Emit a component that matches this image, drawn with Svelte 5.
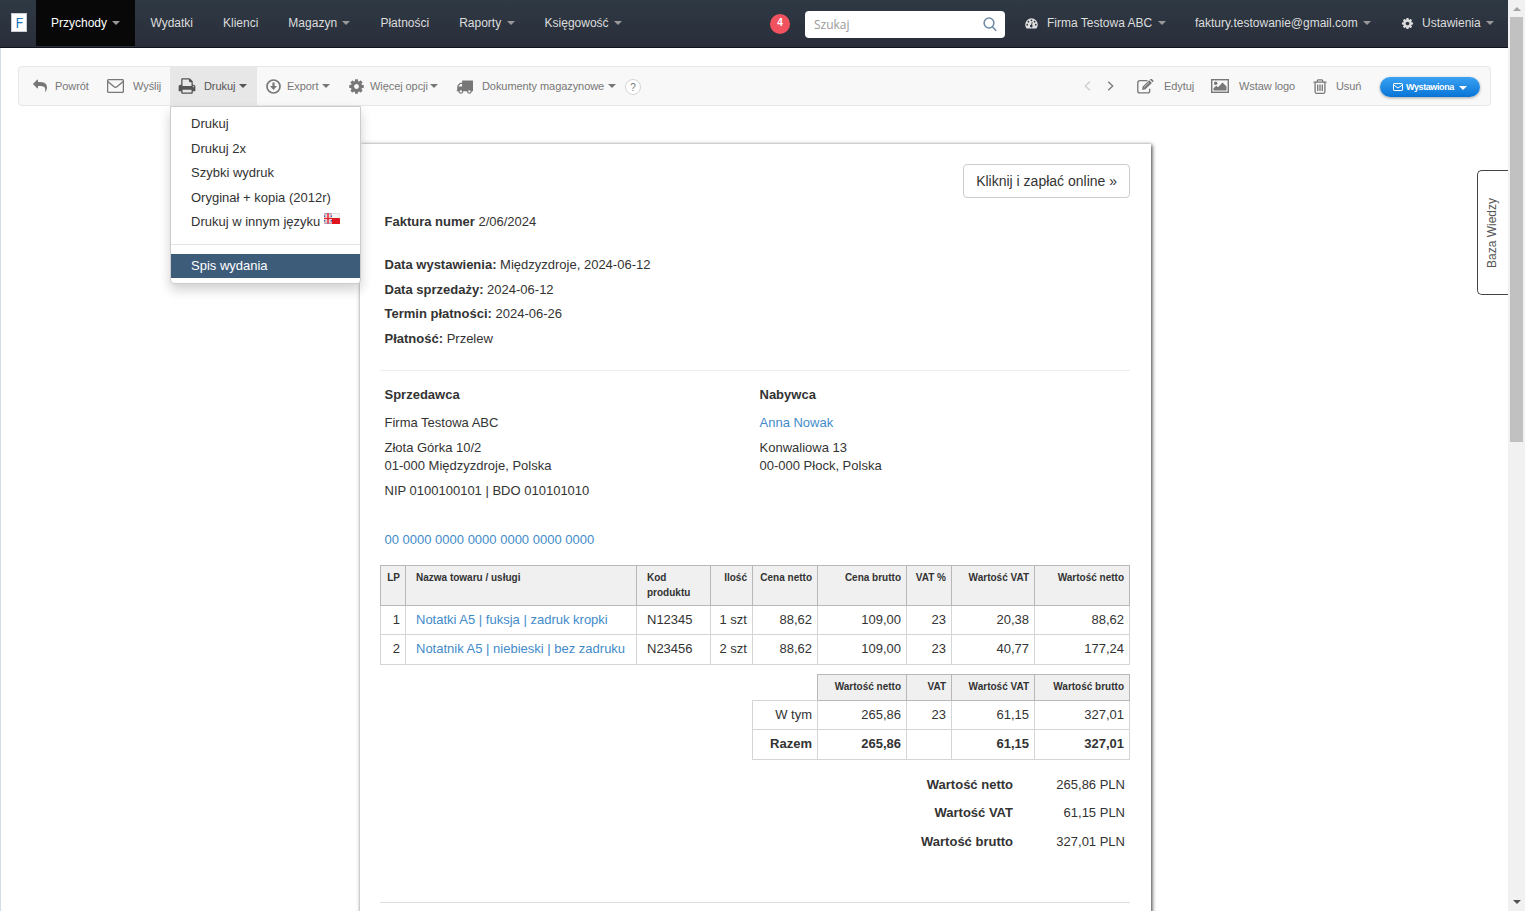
<script>
  const mainNav = [
    { label: 'Przychody', caret: true, active: true },
    { label: 'Wydatki' },
    { label: 'Klienci' },
    { label: 'Magazyn', caret: true },
    { label: 'Płatności' },
    { label: 'Raporty', caret: true },
    { label: 'Księgowość', caret: true }
  ];

  const printMenu = ['Drukuj', 'Drukuj 2x', 'Szybki wydruk', 'Oryginał + kopia (2012r)'];

  const dates = [
    ['Data wystawienia:', 'Międzyzdroje, 2024-06-12'],
    ['Data sprzedaży:', '2024-06-12'],
    ['Termin płatności:', '2024-06-26'],
    ['Płatność:', 'Przelew']
  ];

  const items = [
    { name: 'Notatki A5 | fuksja | zadruk kropki', code: 'N12345', values: ['1 szt', '88,62', '109,00', '23', '20,38', '88,62'] },
    { name: 'Notatnik A5 | niebieski | bez zadruku', code: 'N23456', values: ['2 szt', '88,62', '109,00', '23', '40,77', '177,24'] }
  ];

  const totals = [
    ['Wartość netto', '265,86 PLN'],
    ['Wartość VAT', '61,15 PLN'],
    ['Wartość brutto', '327,01 PLN']
  ];

  const cog =
    'M1152 896q0-106-75-181t-181-75-181 75-75 181 75 181 181 75 181-75 75-181zm512-109v222q0 12-8 23t-20 13l-185 28q-19 54-39 91 35 50 107 138 10 12 10 25t-9 23q-27 37-99 108t-94 71q-12 0-26-9l-138-108q-44 23-91 38-16 136-29 186-7 28-36 28h-222q-14 0-24.5-8.5t-11.5-21.5l-28-184q-49-16-90-37l-141 107q-10 9-25 9-14 0-25-11-126-114-165-168-7-10-7-23 0-12 8-23 15-21 51-66.5t54-70.5q-27-50-41-99l-183-27q-13-2-21-12.5t-8-23.5v-222q0-12 8-23t19-13l186-28q14-46 39-92-40-57-107-138-10-12-10-24 0-10 9-23 26-36 98.5-107.5t94.5-71.5q13 0 26 10l138 107q44-23 91-38 16-136 29-186 7-28 36-28h222q14 0 24.5 8.5t11.5 21.5l28 184q49 16 90 37l142-107q9-9 24-9 13 0 25 10 129 119 165 170 7 8 7 22 0 12-8 23-15 21-51 66.5t-54 70.5q26 50 41 98l183 28q13 2 21 12.5t8 23.5z';
  const reply =
    'M1792 640q0 26-19 45l-512 512q-19 19-45 19t-45-19-19-45v-256h-224q-98 0-175.5 6t-154 21.5-133 42.5-105.5 69.5-80 101-48.5 138.5-17.5 181q0 55 5 123 0 6 2.5 23.5t2.5 26.5q0 15-8.5 25t-23.5 10q-16 0-28-17-7-9-13-22t-13.5-30-10.5-24q-127-285-127-451 0-199 53-333 162-403 875-403h224v-256q0-26 19-45t45-19 45 19l512 512q19 19 19 45z';
  const printer =
    'M448 1536h896v-256h-896v256zm0-640h896v-384h-160q-40 0-68-28t-28-68v-160h-640v640zm1152 64q0-26-19-45t-45-19-45 19-19 45 19 45 45 19 45-19 19-45zm128 0v416q0 13-9.5 22.5t-22.5 9.5h-224v160q0 40-28 68t-68 28h-960q-40 0-68-28t-28-68v-160h-224q-13 0-22.5-9.5t-9.5-22.5v-416q0-79 56.5-135.5t135.5-56.5h64v-544q0-40 28-68t68-28h672q40 0 88 20t76 48l152 152q28 28 48 76t20 88v256h64q79 0 135.5 56.5t56.5 135.5z';
  const truck =
    'M640 1408q0-52-38-90t-90-38-90 38-38 90 38 90 90 38 90-38 38-90zm-384-512h384v-256h-158q-13 0-22 9l-195 195q-9 9-9 22v30zm1280 512q0-52-38-90t-90-38-90 38-38 90 38 90 90 38 90-38 38-90zm256-1088v1024q0 15-4 26.5t-13.5 18.5-16.5 11.5-23.5 6-22.5 2-25.5 0-22.5-.5q0 106-75 181t-181 75-181-75-75-181h-384q0 106-75 181t-181 75-181-75-75-181h-64q-3 0-22.5.5t-25.5 0-22.5-2-23.5-6-16.5-11.5-13.5-18.5-4-26.5q0-26 19-45t45-19v-320q0-8-.5-35t0-38 2.5-34.5 6.5-37 14-30.5 22.5-30l198-198q19-19 50.5-32t58.5-13h160v-192q0-26 19-45t45-19h1024q26 0 45 19t19 45z';
</script>

<div class="window">
  <div class="page">
    <header class="navbar">
      <a class="brand" href="#start" aria-label="Start"><span class="logo">F</span></a>
      <nav class="main-nav">
        {#each mainNav as item}
          <a class="nav-link" class:active={item.active} href="#nav">
            {item.label}
            {#if item.caret}<i class="caret"></i>{/if}
          </a>
        {/each}
      </nav>

      <div class="nav-right">
        <span class="badge">4</span>
        <div class="search">
          <input type="text" placeholder="Szukaj" aria-label="Szukaj" />
          <svg width="14" height="15" viewBox="0 0 14 15" fill="none" stroke="#6b88a5" stroke-width="1.5">
            <circle cx="6" cy="6" r="4.9" />
            <path d="M9.4 9.8l3.8 4" />
          </svg>
        </div>
        <a class="nav-link account" href="#company">
          <svg width="13" height="11" viewBox="0 0 13 11">
            <path fill="#ddd" d="M6.5 .3A6.3 6.3 0 0 0 .2 6.6c0 1.3.4 2.5 1 3.5.2.3.4.4.7.4h9.2c.3 0 .5-.1.7-.4.6-1 1-2.2 1-3.5A6.3 6.3 0 0 0 6.5.3z" />
            <g fill="#2b343f">
              <circle cx="2.2" cy="6.7" r=".85" />
              <circle cx="3.4" cy="3.7" r=".85" />
              <circle cx="6.5" cy="2.3" r=".85" />
              <circle cx="9.6" cy="3.7" r=".85" />
              <circle cx="10.8" cy="6.7" r=".85" />
              <circle cx="6.3" cy="8.1" r="1.3" />
              <path d="M5.9 8l1-4 .7.2-.8 4z" />
            </g>
          </svg>
          Firma Testowa ABC
          <i class="caret"></i>
        </a>
        <a class="nav-link email" href="#user">faktury.testowanie@gmail.com <i class="caret"></i></a>
        <a class="nav-link settings" href="#settings">
          <svg width="13" height="13" viewBox="0 0 1792 1792"><path fill="#ddd" d={cog} /></svg>
          Ustawienia
          <i class="caret"></i>
        </a>
      </div>
    </header>

    <div class="toolbar">
      <a class="tool back" href="#back">
        <svg width="14" height="14" viewBox="0 0 1792 1792"><path transform="translate(1792 0) scale(-1 1)" d={reply} /></svg>
        <span>Powrót</span>
      </a>
      <a class="tool send" href="#send">
        <svg class="line" width="17" height="14" viewBox="0 0 17 14">
          <rect x=".6" y=".6" width="15.8" height="12.8" rx="1.2" />
          <path d="M.8 2.4l6 5.2c1.1.9 2.3.9 3.4 0l6-5.2" />
        </svg>
        <span>Wyślij</span>
      </a>
      <div class="tool print open">
        <svg width="18" height="18" viewBox="0 0 1792 1792"><path d={printer} /></svg>
        <span>Drukuj</span>
        <i class="caret"></i>
        <div class="dropdown">
          {#each printMenu as entry}
            <a href="#print">{entry}</a>
          {/each}
          <a href="#print">
            Drukuj w innym języku
            <svg class="flags" width="16" height="11" viewBox="0 0 16 11">
              <rect width="8" height="11" fill="#3f5fa8" />
              <path d="M0 0l8 11M8 0L0 11" stroke="#fff" stroke-width="1.8" />
              <path d="M0 0l8 11M8 0L0 11" stroke="#d33" stroke-width=".6" />
              <path d="M0 5.5h8M4 0v11" stroke="#fff" stroke-width="3" />
              <path d="M0 5.5h8M4 0v11" stroke="#d8232f" stroke-width="1.5" />
              <rect x="8" width="8" height="5.5" fill="#f4f4f4" />
              <rect x="8" y="5" width="8" height="6" fill="#e0141e" />
              <path d="M8 .5h7.5v5" fill="none" stroke="#d5d5d5" stroke-width=".6" />
            </svg>
          </a>
          <hr />
          <a class="selected" href="#print">Spis wydania</a>
        </div>
      </div>
      <a class="tool export" href="#export">
        <svg class="line" width="15" height="15" viewBox="0 0 15 15">
          <circle cx="7.5" cy="7.5" r="6.5" stroke-width="1.7" />
          <path d="M7.5 3.5v3.5" stroke-width="2.2" />
          <path class="solid" d="M4 7h7l-3.5 4z" />
        </svg>
        <span>Export</span>
        <i class="caret"></i>
      </a>
      <a class="tool more" href="#more">
        <svg width="17" height="17" viewBox="0 0 1792 1792"><path d={cog} /></svg>
        <span>Więcej opcji</span>
        <i class="caret"></i>
      </a>
      <a class="tool stock" href="#stock">
        <svg width="17" height="17" viewBox="0 0 1792 1792"><path d={truck} /></svg>
        <span>Dokumenty magazynowe</span>
        <i class="caret"></i>
      </a>
      <span class="help">?</span>

      <div class="pager">
        <svg class="line prev" width="7" height="10" viewBox="0 0 7 10"><path d="M5.8.8L1.300 5l4.500 4.200" /></svg>
        <svg class="line" width="7" height="10" viewBox="0 0 7 10"><path d="M1.200.8L5.700 5 1.200 9.200" /></svg>
      </div>
      <a class="tool edit" href="#edit">
        <svg class="line" width="17" height="15" viewBox="0 0 17 15">
          <path d="M10.5 1.6H2.8a2 2 0 0 0-2 2v8.300a2 2 0 0 0 2 2h7.900a2 2 0 0 0 2-2V9.700" />
          <path class="solid" d="M5.700 7.600L12.200 1.200l2.700 2.700-6.500 6.400-3.300.6zM12.900.6l.7-.6c.4-.3.8-.3 1.200 0l1.500 1.500c.4.4.4.8 0 1.200l-.7.6z" />
          <path d="M7 8.300l5-4.900" stroke="#f8f8f8" stroke-width=".6" />
        </svg>
        <span>Edytuj</span>
      </a>
      <a class="tool picture" href="#logo">
        <svg class="line" width="18" height="14" viewBox="0 0 18 14">
          <rect x=".7" y=".7" width="16.6" height="12.6" stroke-width="1.4" />
          <circle class="solid" cx="4.7" cy="4.2" r="1.7" />
          <path class="solid" d="M2.500 11.500V9.300L5.300 6.700l1.700 1.600L11.500 3.500l4 4v4z" />
        </svg>
        <span>Wstaw logo</span>
      </a>
      <a class="tool remove" href="#remove">
        <svg class="line" width="14" height="15" viewBox="0 0 14 15">
          <path d="M.5 3.100h13M4.300 3V1.800q0-1 1-1h3.400q1 0 1 1V3M2.100 3.200v9.600q0 1.500 1.400 1.500h7q1.400 0 1.400-1.500V3.200M4.700 5.500v6.500M7 5.500v6.500M9.300 5.500v6.500" />
        </svg>
        <span>Usuń</span>
      </a>
      <button class="status">
        <svg width="10" height="8" viewBox="0 0 10 8" fill="none" stroke="#fff">
          <rect x=".5" y=".5" width="9" height="7" rx=".6" />
          <path d="M.7 2L5 5l4.300-3" />
        </svg>
        <span>Wystawiona</span>
        <i class="caret"></i>
      </button>
    </div>

    <main class="invoice">
      <div class="pay"><a href="#pay">Kliknij i zapłać online »</a></div>
      <p class="number"><b>Faktura numer</b> 2/06/2024</p>

      <div class="dates">
        {#each dates as [label, value]}
          <p><b>{label}</b> {value}</p>
        {/each}
      </div>

      <section class="parties">
        <div>
          <h2>Sprzedawca</h2>
          <p>Firma Testowa ABC</p>
          <p>Złota Górka 10/2<br />01-000 Międzyzdroje, Polska</p>
          <p>NIP 0100100101 | BDO 010101010</p>
          <p class="account-no"><a href="#account">00 0000 0000 0000 0000 0000 0000</a></p>
        </div>
        <div>
          <h2>Nabywca</h2>
          <p><a href="#client">Anna Nowak</a></p>
          <p>Konwaliowa 13<br />00-000 Płock, Polska</p>
        </div>
      </section>

      <table class="lines">
        <colgroup>
          <col class="w-lp" /><col class="w-name" /><col class="w-code" /><col class="w-qty" /><col class="w-price" />
          <col class="w-gross" /><col class="w-rate" /><col class="w-vat" /><col class="w-net" />
        </colgroup>
        <thead>
          <tr>
            <th>LP</th>
            <th class="left">Nazwa towaru / usługi</th>
            <th class="left">Kod<br />produktu</th>
            <th>Ilość</th>
            <th>Cena netto</th>
            <th>Cena brutto</th>
            <th>VAT %</th>
            <th>Wartość VAT</th>
            <th>Wartość netto</th>
          </tr>
        </thead>
        <tbody>
          {#each items as item, i}
            <tr>
              <td>{i + 1}</td>
              <td class="left"><a href="#product">{item.name}</a></td>
              <td class="left">{item.code}</td>
              {#each item.values as value}
                <td>{value}</td>
              {/each}
            </tr>
          {/each}
        </tbody>
      </table>

      <table class="summary">
        <colgroup>
          <col class="w-price" /><col class="w-gross" /><col class="w-rate" /><col class="w-vat" /><col class="w-net" />
        </colgroup>
        <thead>
          <tr>
            <td class="blank"></td>
            <th>Wartość netto</th>
            <th>VAT</th>
            <th>Wartość VAT</th>
            <th>Wartość brutto</th>
          </tr>
        </thead>
        <tbody>
          <tr><td>W tym</td><td>265,86</td><td>23</td><td>61,15</td><td>327,01</td></tr>
          <tr class="sum"><td>Razem</td><td>265,86</td><td></td><td>61,15</td><td>327,01</td></tr>
        </tbody>
      </table>

      <dl class="totals">
        {#each totals as [label, value]}
          <dt>{label}</dt>
          <dd>{value}</dd>
        {/each}
      </dl>
      <hr class="footer-line" />
    </main>

    <a class="knowledge" href="#help"><span>Baza Wiedzy</span></a>
  </div>

  <div class="scrollbar">
    <i class="arrow up"></i>
    <div class="thumb"></div>
    <i class="arrow down"></i>
  </div>
</div>

<style>
  :global(body) {
    margin: 0;
    overflow: hidden;
    background: #fff;
  }

  .window {
    display: flex;
    height: 911px;
    overflow: hidden;
    font-family: 'Liberation Sans', Arial, sans-serif;
    font-size: 13px;
    line-height: 18.57px;
    color: #333;
  }

  .window * {
    box-sizing: border-box;
  }

  a {
    color: #428bca;
    text-decoration: none;
  }

  p,
  h2,
  dl,
  dd {
    margin: 0;
  }

  .page {
    position: relative;
    width: 1508px;
    height: 911px;
    overflow: hidden;
    box-shadow: inset 1px 0 #d3dce8;
  }

  .caret {
    display: inline-block;
    flex-shrink: 0;
    border: 4px solid transparent;
    border-top-color: currentColor;
    border-bottom: 0;
  }

  /* top bar */
  .navbar {
    display: flex;
    height: 48px;
    background: linear-gradient(#2e3944, #2a2e3a);
    border-bottom: 1px solid #12141c;
    font-size: 12px;
  }

  .brand {
    width: 36px;
    padding: 13px 0 0 11px;
  }

  .logo {
    display: block;
    width: 16px;
    height: 19px;
    border: 1px solid #c9ccd6;
    background: #fff;
    color: #1b75b8;
    font: 15px/17px 'Open Sans', sans-serif;
    text-align: center;
  }

  .main-nav,
  .nav-right {
    display: flex;
  }

  .nav-link {
    display: flex;
    align-items: center;
    height: 46px;
    padding: 0 15px;
    color: #ddd;
    white-space: nowrap;
  }

  .nav-link .caret {
    margin-left: 5.4px;
    color: #999;
  }

  .nav-link.active {
    background: #080808;
    color: #fff;
  }

  .nav-right {
    margin-left: auto;
  }

  .badge {
    width: 20px;
    height: 20px;
    margin: 14px 15px 0 0;
    border-radius: 50%;
    background: #f0525f;
    color: #fff;
    font-size: 10px;
    font-weight: bold;
    line-height: 18px;
    text-align: center;
  }

  .search {
    display: flex;
    align-items: center;
    width: 200px;
    height: 27px;
    margin-top: 11px;
    padding: 0 8px 0 9px;
    border-radius: 4px;
    background: #fff;
  }

  .search input {
    flex: 1;
    min-width: 0;
    padding: 0;
    border: 0;
    outline: 0;
    background: none;
    font: 12px 'Open Sans', sans-serif;
  }

  .search input::placeholder {
    color: #999;
  }

  .account {
    width: 175px;
    padding: 0 0 0 20px;
  }

  .account svg {
    margin-right: 9px;
  }

  .email {
    width: 206px;
  }

  .settings {
    width: 122px;
  }

  .settings svg {
    margin-right: 8px;
  }

  /* document toolbar */
  .toolbar {
    display: flex;
    height: 40px;
    margin: 18px 17px 0 18px;
    padding: 0 10px 0 5px;
    border: 1px solid #e7e7e7;
    border-radius: 4px;
    background: #f8f8f8;
    font-size: 11px;
  }

  .tool {
    display: flex;
    flex-shrink: 0;
    align-items: center;
    padding-left: 9px;
    color: #777;
    letter-spacing: -0.07px;
    white-space: nowrap;
  }

  svg {
    flex-shrink: 0;
    fill: currentColor;
  }

  .search svg,
  .status svg {
    fill: none;
  }

  .line {
    fill: none;
    stroke: currentColor;
    stroke-width: 1.3;
  }

  .line .solid {
    fill: currentColor;
    stroke: none;
  }

  .tool svg {
    margin-right: 9px;
  }

  .tool > .caret {
    margin-left: 4px;
  }

  .back {
    width: 74px;
  }

  .tool.back svg {
    margin-right: 8px;
  }

  .send {
    width: 72px;
  }

  .print {
    position: relative;
    width: 87px;
    padding-left: 8px;
  }

  .print > svg {
    margin-right: 8px;
  }

  .open {
    background: #e7e7e7;
    color: #555;
  }

  .export {
    width: 83px;
  }

  .export svg {
    margin-right: 6px;
  }

  .more {
    width: 108px;
    padding-left: 8px;
  }

  .more svg {
    margin-right: 5px;
  }

  .tool.more > .caret {
    margin-left: 2px;
  }

  .stock {
    width: 177px;
    padding-left: 8px;
  }

  .help {
    width: 16px;
    height: 16px;
    margin-top: 12px;
    border: 1px solid #d5d5d5;
    border-radius: 50%;
    background: #fff;
    color: #777;
    font-size: 10px;
    line-height: 15px;
    text-align: center;
  }

  .pager {
    display: flex;
    align-items: center;
    gap: 16px;
    margin-left: auto;
    margin-right: 14px;
    color: #777;
  }

  .prev {
    color: #ccc;
  }

  .edit {
    width: 75px;
  }

  .edit svg,
  .picture svg {
    margin-right: 10px;
  }

  .picture {
    width: 101px;
    padding-left: 8px;
  }

  .remove {
    width: 76px;
  }

  .status {
    display: flex;
    align-items: center;
    width: 100px;
    height: 20px;
    margin-top: 10px;
    padding: 0 12px 0 13px;
    border: 0;
    border-radius: 10px;
    background: linear-gradient(#3aa2f3, #0874d6);
    box-shadow: 0 1px 3px rgba(0, 0, 0, 0.35);
    color: #fff;
    font: bold 9px 'Liberation Sans', Arial, sans-serif;
    letter-spacing: -0.4px;
  }

  .status svg {
    margin-right: 3px;
  }

  .status .caret {
    margin: 1px 1px 0 auto;
  }

  .dropdown {
    position: absolute;
    z-index: 5;
    top: 39px;
    left: 0;
    width: 191px;
    height: 178px;
    padding: 5px 0;
    border: 1px solid #ccc;
    border-radius: 0 0 4px 4px;
    background: #fff;
    box-shadow: 0 6px 12px rgba(0, 0, 0, 0.18);
    font-size: 13px;
    letter-spacing: 0;
  }

  .dropdown a {
    display: block;
    height: 24.5px;
    padding: 3px 20px;
    color: #333;
  }

  .dropdown .flags {
    margin: 0 0 2px;
    vertical-align: baseline;
  }

  .dropdown hr {
    height: 1px;
    margin: 9px 0;
    border: 0;
    background: #e5e5e5;
  }

  .dropdown .selected {
    background: #3d5c7a;
    color: #fff;
  }

  /* invoice sheet */
  .invoice {
    width: 791px;
    height: 800px;
    margin: 38px 0 0 360px;
    padding: 20px 20px 0;
    background: #fff;
    box-shadow: 1px 1px 4px #333;
  }

  .pay {
    display: flex;
    justify-content: flex-end;
    padding-right: 1px;
  }

  .pay a {
    height: 34px;
    padding: 6px 12px;
    border: 1px solid #ccc;
    border-radius: 4px;
    color: #333;
    font-size: 14px;
    line-height: 20px;
  }

  .number {
    padding: 15px 0 0 4.5px;
  }

  .dates {
    padding: 24.4px 0 15.7px 4.5px;
  }

  .dates p {
    margin-bottom: 6px;
  }

  .parties {
    display: grid;
    grid-template-columns: 375px 375px;
    height: 195px;
    width: 750px;
    padding: 15px 0 0 4.5px;
    border-top: 1px solid #eee;
  }

  .parties h2 {
    margin-bottom: 9.7px;
    font-size: 13px;
    line-height: 18.57px;
  }

  .parties p {
    margin-bottom: 6px;
  }

  .parties .account-no {
    margin-top: 30.3px;
  }

  table {
    border-collapse: collapse;
    table-layout: fixed;
  }

  .lines {
    width: 750px;
  }

  .summary {
    width: 378px;
    margin: 9px 0 0 372px;
  }

  .w-lp {
    width: 25px;
  }

  .w-name {
    width: 231px;
  }

  .w-code {
    width: 74px;
  }

  .w-qty {
    width: 42px;
  }

  .w-price {
    width: 65px;
  }

  .w-gross {
    width: 89px;
  }

  .w-rate {
    width: 45px;
  }

  .w-vat {
    width: 83px;
  }

  .w-net {
    width: 95px;
  }

  th,
  td {
    padding: 4px 5px;
    border: 1px solid #d5d5d5;
    text-align: right;
    vertical-align: top;
    white-space: nowrap;
  }

  td {
    height: 29.5px;
    padding-top: 5px;
  }

  th {
    height: 40px;
    border-color: #b8b8b8;
    background: #f0f0f0;
    font-size: 10px;
    line-height: 15px;
  }

  .summary th,
  .summary .blank {
    height: 26px;
  }

  .summary .blank {
    border-top: 0;
    border-left: 0;
    border-right-color: #b8b8b8;
  }

  .left {
    padding-left: 10px;
    text-align: left;
  }

  .sum {
    font-weight: bold;
  }

  .totals {
    display: grid;
    grid-template-columns: 633px 112px;
    padding-top: 11px;
    text-align: right;
    line-height: 28.5px;
  }

  .totals dt {
    font-weight: bold;
  }

  .footer-line {
    width: 750px;
    height: 1px;
    margin: 46px 0 0;
    border: 0;
    background: #ddd;
  }

  .knowledge {
    position: absolute;
    top: 170px;
    right: 0;
    display: flex;
    align-items: center;
    justify-content: center;
    width: 31px;
    height: 125px;
    padding: 2px 2px 0 0;
    border: 1px solid #444;
    border-right: 0;
    border-radius: 5px 0 0 5px;
    background: #fff;
    color: #555;
    font-size: 12px;
  }

  .knowledge span {
    writing-mode: vertical-rl;
    transform: rotate(180deg);
  }

  /* window scrollbar */
  .scrollbar {
    display: flex;
    flex-direction: column;
    align-items: center;
    width: 17px;
    background: #f1f1f1;
  }

  .thumb {
    width: 13px;
    height: 425px;
    margin-top: 6px;
    background: #c1c1c1;
  }

  .arrow {
    border: 4px solid transparent;
  }

  .up {
    margin-top: 7px;
    border-top: 0;
    border-bottom-color: #a3a3a3;
  }

  .down {
    margin: auto 0 7px;
    border-bottom: 0;
    border-top-color: #505050;
  }
</style>
